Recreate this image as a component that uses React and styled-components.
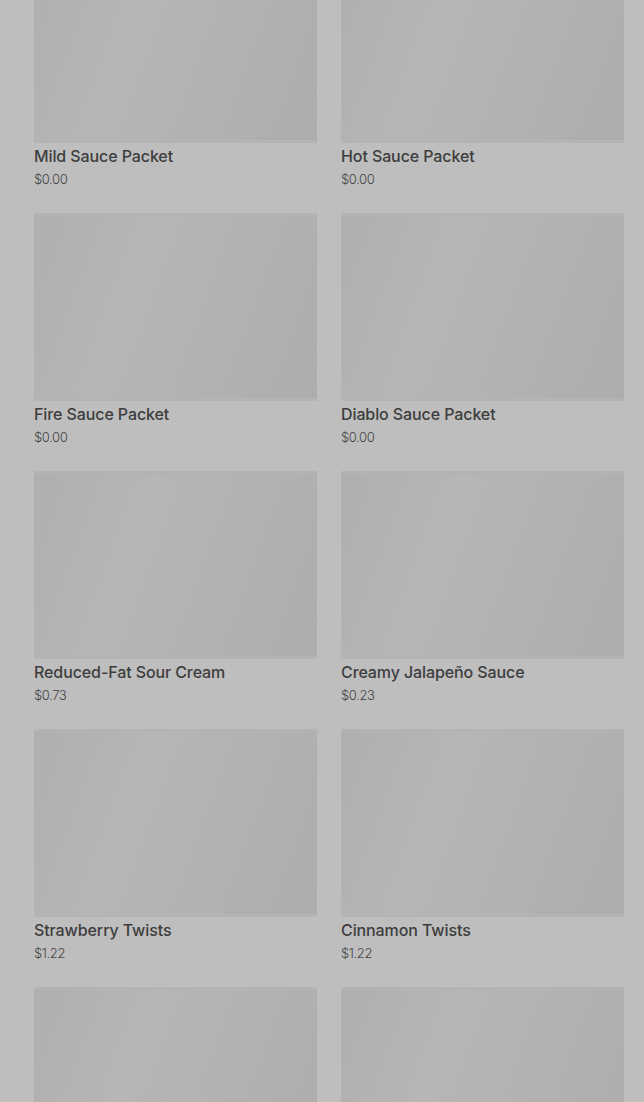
import React from "react";
import styled, { createGlobalStyle } from 'styled-components';

const GlobalStyle = createGlobalStyle`
    html, body {
        margin: 0;
        padding: 0;
        background-color: #bebebe;
        overflow: hidden;
    }
`;

const Page = styled.div`
    box-sizing: border-box;
    width: 644px;
    height: 1102px;
    overflow: hidden;
    padding: 0 20px 0 34px;
    font-family: "Inter", "Liberation Sans", sans-serif;
`;

const Grid = styled.div`
    display: grid;
    grid-template-columns: 283px 283px;
    column-gap: 24px;
    row-gap: 24px;
    margin-top: -45px;
`;

const Card = styled.div`
    display: flex;
    flex-direction: column;
`;

const Thumb = styled.div`
    height: 188px;
    background: linear-gradient(110deg, #afafaf 0%, #b6b6b6 35%, #b2b2b2 65%, #adadad 100%);
    box-shadow: inset 0 -3px 0 #b4b4b4, inset 0 3px 0 #b3b3b3;
`;

const Title = styled.div`
    color: #3d3d3d;
    font-size: 16px;
    font-weight: 500;
    line-height: 26px;
    letter-spacing: -0.1px;
`;

const Price = styled.div`
    color: #444;
    font-size: 13px;
    font-weight: 300;
    line-height: 20px;
    letter-spacing: -0.4px;
`;

const items = [
    { name: "Mild Sauce Packet", price: "$0.00" },
    { name: "Hot Sauce Packet", price: "$0.00" },
    { name: "Fire Sauce Packet", price: "$0.00" },
    { name: "Diablo Sauce Packet", price: "$0.00" },
    { name: "Reduced-Fat Sour Cream", price: "$0.73" },
    { name: "Creamy Jalapeño Sauce", price: "$0.23" },
    { name: "Strawberry Twists", price: "$1.22" },
    { name: "Cinnamon Twists", price: "$1.22" },
    { name: "", price: "" },
    { name: "", price: "" },
];

const App = () => {
    return (
        <Page>
            <GlobalStyle/>
            <Grid>
                {items.map((item, i) => (
                    <Card key={i}>
                        <Thumb/>
                        <Title>{item.name}</Title>
                        <Price>{item.price}</Price>
                    </Card>
                ))}
            </Grid>
        </Page>
    );
}

export default App;
